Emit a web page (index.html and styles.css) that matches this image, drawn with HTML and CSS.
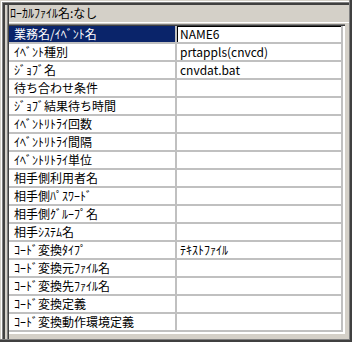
FILE: index.html
```html
<!DOCTYPE html>
<html lang="ja">
<head>
<meta charset="utf-8">
<link rel="stylesheet" href="styles.css">
</head>
<body>
<div class="win">
  <div class="main">
    <div class="title">ﾛｰｶﾙﾌｧｲﾙ名:なし</div>
    <div class="sep"></div>
    <div class="table">
      <div class="grid">
        <div class="cell key sel">業務名/ｲﾍﾞﾝﾄ名</div><div class="cell val focus">NAME6</div>
        <div class="cell key">ｲﾍﾞﾝﾄ種別</div><div class="cell val">prtappls(cnvcd)</div>
        <div class="cell key">ｼﾞｮﾌﾞ名</div><div class="cell val">cnvdat.bat</div>
        <div class="cell key">待ち合わせ条件</div><div class="cell val"></div>
        <div class="cell key">ｼﾞｮﾌﾞ結果待ち時間</div><div class="cell val"></div>
        <div class="cell key">ｲﾍﾞﾝﾄﾘﾄﾗｲ回数</div><div class="cell val"></div>
        <div class="cell key">ｲﾍﾞﾝﾄﾘﾄﾗｲ間隔</div><div class="cell val"></div>
        <div class="cell key">ｲﾍﾞﾝﾄﾘﾄﾗｲ単位</div><div class="cell val"></div>
        <div class="cell key">相手側利用者名</div><div class="cell val"></div>
        <div class="cell key">相手側ﾊﾟｽﾜｰﾄﾞ</div><div class="cell val"></div>
        <div class="cell key">相手側ｸﾞﾙｰﾌﾟ名</div><div class="cell val"></div>
        <div class="cell key">相手ｼｽﾃﾑ名</div><div class="cell val"></div>
        <div class="cell key">ｺｰﾄﾞ変換ﾀｲﾌﾟ</div><div class="cell val">ﾃｷｽﾄﾌｧｲﾙ</div>
        <div class="cell key">ｺｰﾄﾞ変換元ﾌｧｲﾙ名</div><div class="cell val"></div>
        <div class="cell key">ｺｰﾄﾞ変換先ﾌｧｲﾙ名</div><div class="cell val"></div>
        <div class="cell key">ｺｰﾄﾞ変換定義</div><div class="cell val"></div>
        <div class="cell key">ｺｰﾄﾞ変換動作環境定義</div><div class="cell val"></div>
      </div>
    </div>
  </div>
</div>
</body>
</html>
```
FILE: styles.css
```css
html, body {
  margin: 0;
  padding: 0;
  background: #d4d0c8;
}
body {
  font-family: "Noto Sans CJK JP", sans-serif;
  font-size: 12px;
  color: #000;
}
.win {
  box-sizing: border-box;
  width: 352px;
  height: 342px;
  background: #d4d0c8;
  padding: 5px 3px 3px 5px;
  box-shadow:
    inset -2px -2px 0 #404040,
    inset -3px -3px 0 #808080,
    inset 1px 1px 0 #d4d0c8,
    inset 2px 2px 0 #ffffff,
    inset 3px 3px 0 #808080,
    inset 5px 5px 0 #404040;
  overflow: hidden;
}
.main {
  margin-left: 2px;
  padding-left: 2px;
  box-shadow: inset 1px 0 0 #808080, inset 2px 0 0 #404040;
  height: 100%;
  box-sizing: border-box;
}
.title {
  height: 17px;
  line-height: 16px;
  padding-left: 1px;
  white-space: nowrap;
}
.sep {
  height: 1px;
  background: #ffffff;
  margin-bottom: 1px;
}
.table {
  width: 336px;
  padding: 2px 2px 2px 0;
  box-sizing: border-box;
  box-shadow:
    inset 0 1px 0 #808080,
    inset 0 2px 0 #404040,
    inset -2px -2px 0 #ffffff;
}
.grid {
  display: grid;
  grid-template-columns: 166px 164px;
  column-gap: 2px;
  row-gap: 2px;
  padding: 0 2px 2px 0;
  background: #c0c0c0;
}
.cell {
  height: 16px;
  line-height: 16px;
  background: #ffffff;
  white-space: nowrap;
  overflow: hidden;
}
.key {
  padding-left: 5px;
}
.val {
  padding-left: 3px;
}
.sel {
  background: #0a246a;
  color: #ffffff;
}
.focus {
  box-shadow: inset 1px 1px 0 #000000;
}
```
